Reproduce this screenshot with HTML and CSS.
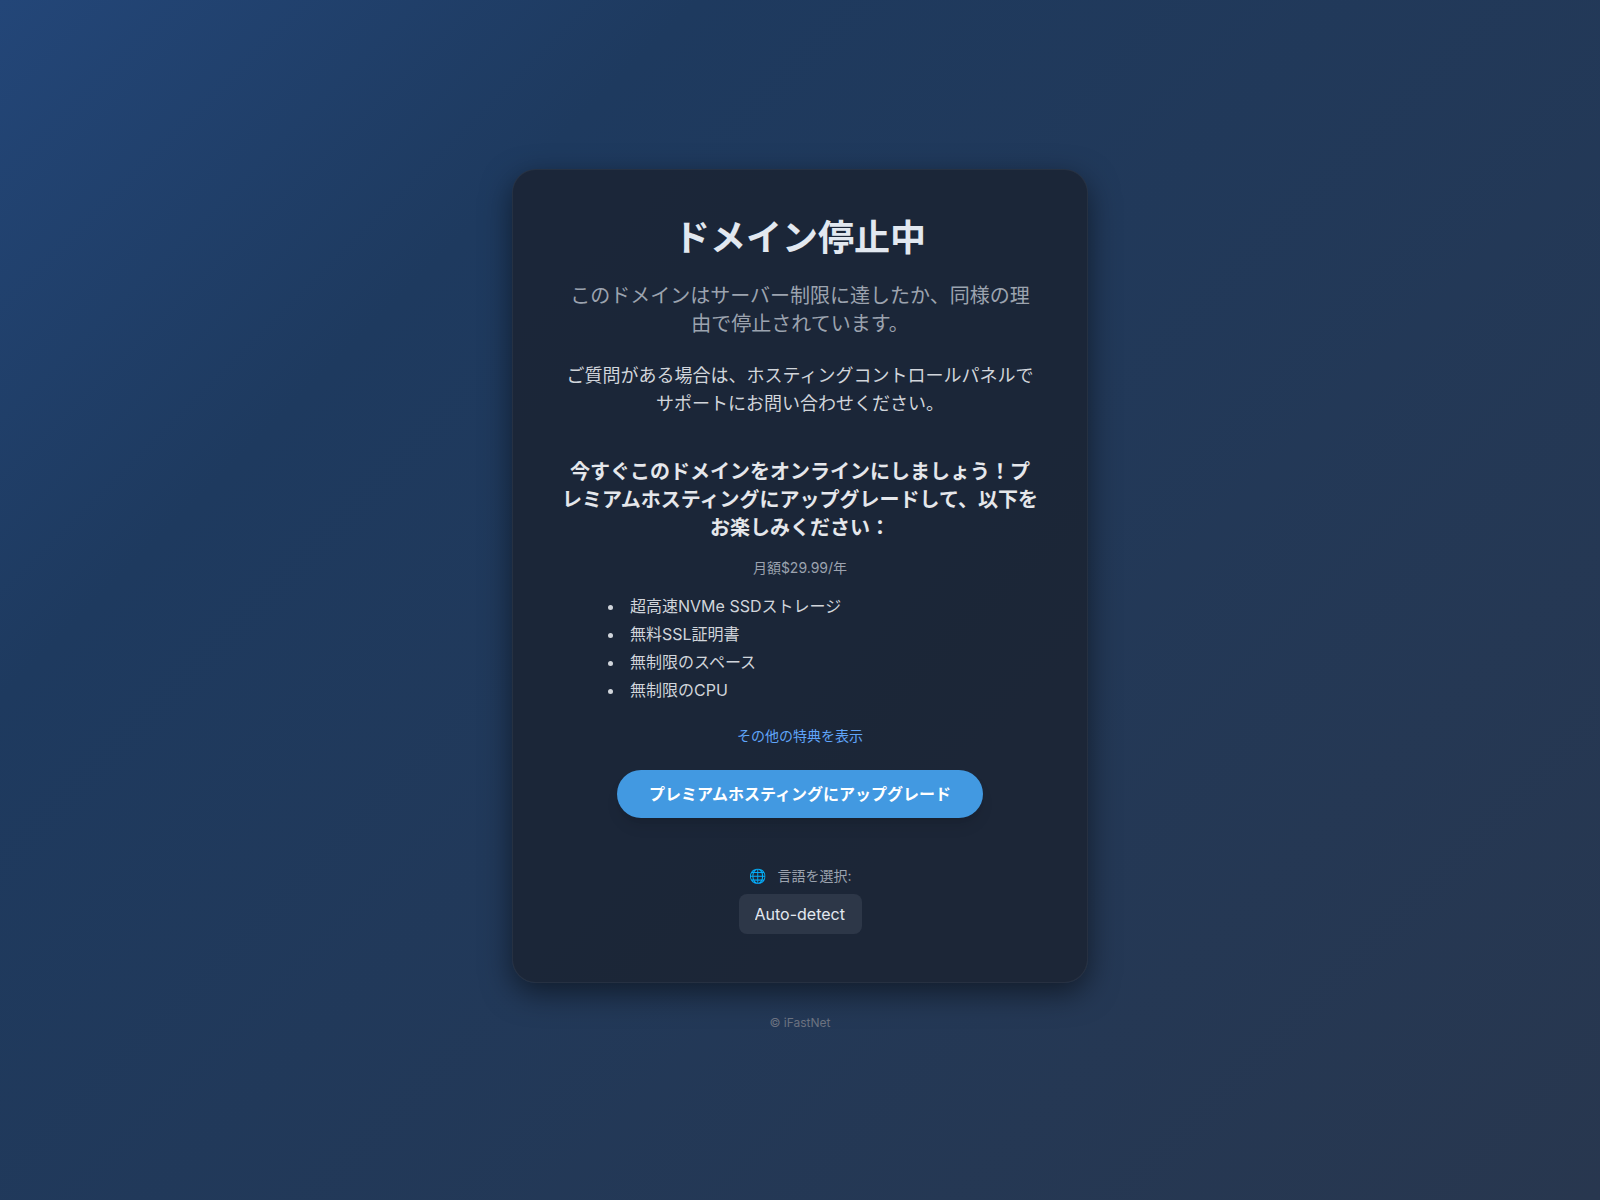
FILE: index.html
```html
<!DOCTYPE html>
<html lang="ja">
<head>
<meta charset="utf-8">
<meta name="viewport" content="width=device-width, initial-scale=1">
<title>ドメイン停止中</title>
<link rel="stylesheet" href="styles.css">
</head>
<body>
<main class="card">
  <h1 class="title">ドメイン停止中</h1>
  <p class="lead">このドメインはサーバー制限に達したか、同様の理由で停止されています。</p>
  <p class="text">ご質問がある場合は、ホスティングコントロールパネルでサポートにお問い合わせください。</p>
  <section class="offer">
    <h2 class="offer-title">今すぐこのドメインをオンラインにしましょう！プレミアムホスティングにアップグレードして、以下をお楽しみください：</h2>
    <p class="price">月額$29.99/年</p>
    <ul class="benefits">
      <li>超高速NVMe SSDストレージ</li>
      <li>無料SSL証明書</li>
      <li>無制限のスペース</li>
      <li>無制限のCPU</li>
    </ul>
    <a class="more" href="#">その他の特典を表示</a>
    <a class="upgrade" href="#">プレミアムホスティングにアップグレード</a>
  </section>
  <div class="language">
    <label class="language-label" for="language"><span class="globe">🌐</span> 言語を選択:</label>
    <select class="language-select" id="language">
      <option>Auto-detect</option>
    </select>
  </div>
</main>
<footer class="footer">© iFastNet</footer>
</body>
</html>
```
FILE: styles.css
```css
* {
  box-sizing: border-box;
  margin: 0;
  padding: 0;
}

body {
  min-height: 100vh;
  display: flex;
  flex-direction: column;
  align-items: center;
  justify-content: center;
  font: 16px/24px Inter, "Noto Sans CJK JP", sans-serif;
  color: #e2e8f0;
  background: linear-gradient(135deg, #234678 0%, #1e3a5f 25%, #28374f 100%);
}

.card {
  width: 100%;
  max-width: 576px;
  padding: 48px;
  text-align: center;
  background: rgba(26, 34, 48, 0.8);
  border: 1px solid rgba(255, 255, 255, 0.05);
  border-radius: 24px;
  box-shadow: 0 10px 30px rgba(0, 0, 0, 0.5);
}

.title {
  font-size: 36px;
  line-height: 40px;
  font-weight: 700;
}

.lead {
  margin-top: 24px;
  font-size: 20px;
  line-height: 28px;
  color: #9ca3af;
}

.text {
  margin-top: 24px;
  font-size: 18px;
  line-height: 28px;
  color: #d1d5db;
}

.offer {
  display: flex;
  flex-direction: column;
  align-items: center;
  margin-top: 40px;
}

.offer-title {
  font-size: 20px;
  line-height: 28px;
  font-weight: 600;
  color: #e5e7eb;
}

.price {
  margin-top: 16px;
  font-size: 14px;
  line-height: 20px;
  color: #9ca3af;
}

.benefits {
  display: grid;
  gap: 4px;
  width: 100%;
  max-width: 384px;
  margin-top: 16px;
  text-align: left;
  list-style: disc inside;
  color: #d1d5db;
}

.more {
  margin-top: 24px;
  font-size: 14px;
  line-height: 20px;
  color: #60a5fa;
  text-decoration: none;
}

.upgrade {
  margin-top: 24px;
  padding: 12px 32px;
  font-weight: 600;
  color: #fff;
  text-decoration: none;
  background: #4299e1;
  border-radius: 24px;
  box-shadow: 0 10px 15px -3px rgba(0, 0, 0, 0.1), 0 4px 6px -4px rgba(0, 0, 0, 0.1);
}

.language {
  display: flex;
  flex-direction: column;
  align-items: center;
  gap: 8px;
  margin-top: 48px;
}

.language-label {
  font-size: 14px;
  line-height: 20px;
  color: #9ca3af;
}

.globe {
  margin-right: 8px;
}

.language-select {
  appearance: none;
  padding: 8px 16px;
  font: inherit;
  color: #e2e8f0;
  background: #2d3748;
  border: 0;
  border-radius: 8px;
}

.footer {
  margin-top: 32px;
  font-size: 12px;
  line-height: 16px;
  color: #6b7280;
}
```
